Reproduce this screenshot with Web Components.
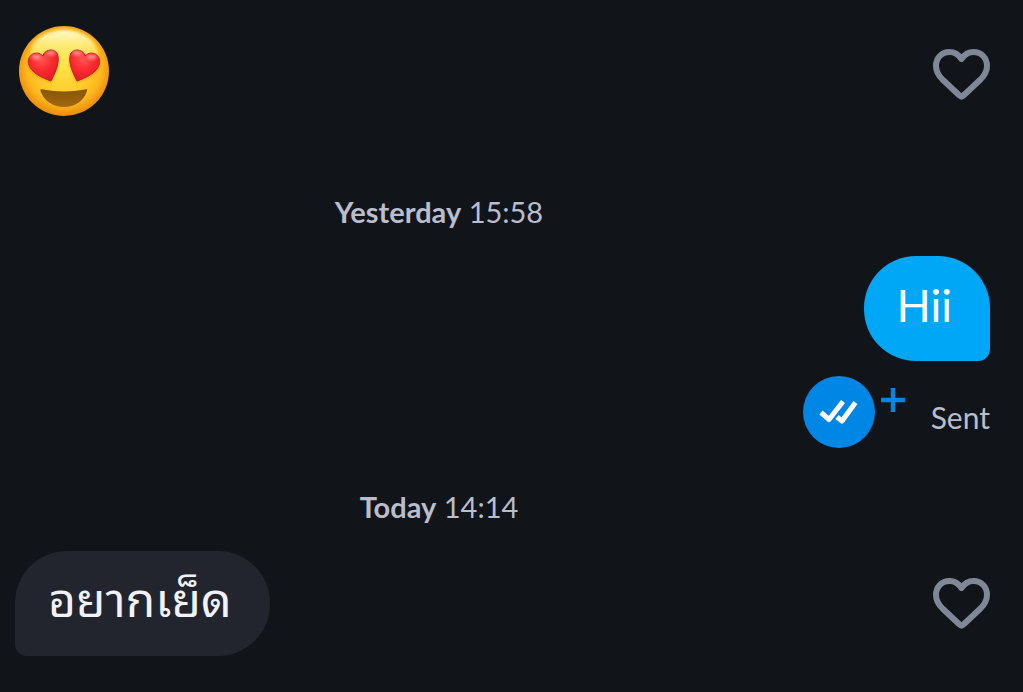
<!DOCTYPE html>
<html lang="th">
<head>
<meta charset="utf-8">
<meta name="viewport" content="width=device-width, initial-scale=1">
<title>Conversation</title>
<style>
body { margin: 0; min-height: 100vh; background: #111519; color: #f1f2f6; font-family: Lato, "Noto Sans", sans-serif; }
</style>
</head>
<body>
<chat-thread>
  <chat-row likeable><love-emoji></love-emoji></chat-row>
  <time-stamp time="15:58" class="first">Yesterday</time-stamp>
  <chat-row own><chat-bubble own>Hii</chat-bubble></chat-row>
  <read-status>Sent</read-status>
  <time-stamp time="14:14">Today</time-stamp>
  <chat-row likeable><chat-bubble lang="th">อยากเย็ด</chat-bubble></chat-row>
</chat-thread>
<script>
function define(name, html, setup) {
  const template = document.createElement('template');
  template.innerHTML = html;
  customElements.define(name, class extends HTMLElement {
    constructor() {
      super();
      this.attachShadow({ mode: 'open' }).append(template.content.cloneNode(true));
    }
    connectedCallback() { if (setup) setup(this, this.shadowRoot); }
  });
}

define('chat-thread', `
<style>
:host { display: flex; flex-direction: column; padding: 26px 33px 36px 15px; }
::slotted(time-stamp) { margin: 40px 0 26px; }
::slotted(time-stamp.first) { margin-top: 70px; }
::slotted(read-status) { margin-top: 15px; }
</style>
<slot></slot>`);

define('chat-row', `
<style>
:host { display: flex; align-items: center; justify-content: space-between; }
:host([own]) { justify-content: flex-end; }
like-button { display: none; }
:host([likeable]) like-button { display: block; }
</style>
<slot></slot><like-button></like-button>`);

define('like-button', `
<style>
:host { display: block; }
button { display: block; padding: 0; border: 0; background: none; color: #808797; cursor: pointer; }
svg { display: block; }
</style>
<button type="button" aria-label="Like message">
<svg width="57" height="52" viewBox="0 0 57 52" fill="none" stroke="currentColor" stroke-width="6" stroke-linejoin="round" aria-hidden="true">
<path d="M28.5 10C25.5 5.5 21.5 3 16.5 3C8.5 3 3 9 3 17C3 22.5 5.5 26.5 9.5 30.5L26.500 46.500Q28.5 48.500 30.500 46.500L47.5 30.5C51.5 26.5 54 22.5 54 17C54 9 48.5 3 40.5 3C35.5 3 31.5 5.5 28.5 10Z"/>
</svg></button>`);

define('love-emoji', `
<style>
:host { display: block; padding: 0 0 7px 4px; }
svg { display: block; }
</style>
<svg width="90" height="90" viewBox="0 0 90 90" role="img" aria-label="Smiling face with heart eyes">
<defs>
<radialGradient id="face" cx=".5" cy=".46" r=".55"><stop offset="0" stop-color="#ffe040"/><stop offset=".45" stop-color="#ffd030"/><stop offset=".75" stop-color="#fdb81e"/><stop offset="1" stop-color="#e9860a"/></radialGradient>
<linearGradient id="shine" x2="0" y2="1"><stop offset="0" stop-color="#fffbd0"/><stop offset=".4" stop-color="#fff27a" stop-opacity=".7"/><stop offset="1" stop-color="#ffee50" stop-opacity="0"/></linearGradient>
<linearGradient id="mouth" x2="0" y2="1"><stop offset="0" stop-color="#85550a"/><stop offset="1" stop-color="#a36a0e"/></linearGradient>
<radialGradient id="heart" cx=".45" cy=".3" r=".7"><stop offset="0" stop-color="#ff5552"/><stop offset=".5" stop-color="#f92c30"/><stop offset="1" stop-color="#e41a26"/></radialGradient>
<filter id="soft" x="-20%" y="-20%" width="140%" height="140%"><feGaussianBlur stdDeviation="1.5"/></filter>
</defs>
<circle cx="45" cy="45" r="45" fill="url(#face)"/>
<ellipse cx="45" cy="29" rx="34" ry="25" fill="url(#shine)" filter="url(#soft)"/>
<g fill="#ce7e08" opacity=".45" filter="url(#soft)">
<path d="M32 57C24 54 11 49 9.5 40C8 33 16 28 22 33C24 25 34 23 38 29C42 37 36 49 32 57Z"/>
<path d="M58 57C66 54 79 49 80.5 40C82 33 74 28 68 33C66 25 56 23 52 29C48 37 54 49 58 57Z"/>
</g>
<g fill="url(#heart)" stroke="#c81827">
<path d="M32 55C24 52 11.5 47 9.5 37.500C8 28.500 17.500 23.500 24 30C25 24 34 21.500 38 27C42 35 36 47 32 55Z"/>
<path d="M58 55C66 52 78.5 47 80.5 37.500C82 28.500 72.500 23.500 66 30C65 24 56 21.500 52 27C48 35 54 47 58 55Z"/>
</g>
<g fill="#ffb3ac" opacity=".7" filter="url(#soft)">
<ellipse cx="17" cy="31" rx="4.5" ry="2.5"/><ellipse cx="32" cy="27" rx="4.5" ry="2.5"/>
<ellipse cx="58" cy="27" rx="4.5" ry="2.5"/><ellipse cx="73" cy="31" rx="4.5" ry="2.5"/>
</g>
<path d="M21.5 65C21 63 22.5 63 24 63.5Q45 67.5 66 63.5C68 63 68.5 63 68 65C65 75 56 81 45 81C34 81 25 75 21.5 65Z" fill="url(#mouth)"/>
</svg>`);

define('time-stamp', `
<style>
:host { display: block; padding-right: 127px; color: #b9bdcc; font-size: 29px; line-height: 37px; text-align: center; }
b { font-weight: 700; }
</style>
<b><slot></slot></b> <time></time>`, (host, root) => {
  const time = root.querySelector('time');
  time.textContent = host.getAttribute('time');
  time.dateTime = host.getAttribute('time');
});

define('chat-bubble', `
<style>
:host { display: block; box-sizing: border-box; padding: 15px 38px 30px 33px; border-radius: 52px 52px 52px 12px; background: #22252e; color: #f1f2f6; font-family: "Noto Sans Thai Looped", "Noto Looped Thai", Thonburi, Loma, Garuda, Waree, "Noto Sans", sans-serif; font-size: 48px; line-height: 60px; white-space: nowrap; }
:host([own]) { padding: 19px 38px 26px 32px; border-radius: 52px 52px 12px 52px; background: #00a7f7; color: #fff; font-family: Lato, sans-serif; font-size: 45px; }
</style>
<slot></slot>`);

define('read-status', `
<style>
:host { display: flex; align-items: center; justify-content: flex-end; color: #b9bdcc; font-size: 30px; line-height: 36px; }
button { display: flex; gap: 6px; padding: 0; border: 0; background: none; color: #0087e6; cursor: pointer; }
svg { display: block; }
.plus { margin-top: 12px; }
span { padding: 10px 0 0 26px; }
</style>
<button type="button" aria-label="Read receipts">
<svg width="72" height="72" viewBox="0 0 72 72" aria-hidden="true"><circle cx="36" cy="36" r="36" fill="currentColor"/><g fill="none" stroke="#fff" stroke-width="5" stroke-linejoin="round"><path d="M18 36.5L26 43.5L40 25.5"/><path d="M34 41L39 45L52.5 26.5"/></g></svg>
<svg class="plus" width="24" height="24" viewBox="0 0 24 24" aria-hidden="true"><path d="M12 0V24M0 12H24" stroke="currentColor" stroke-width="4.5"/></svg>
</button>
<span><slot></slot></span>`);
</script>
</body>
</html>
